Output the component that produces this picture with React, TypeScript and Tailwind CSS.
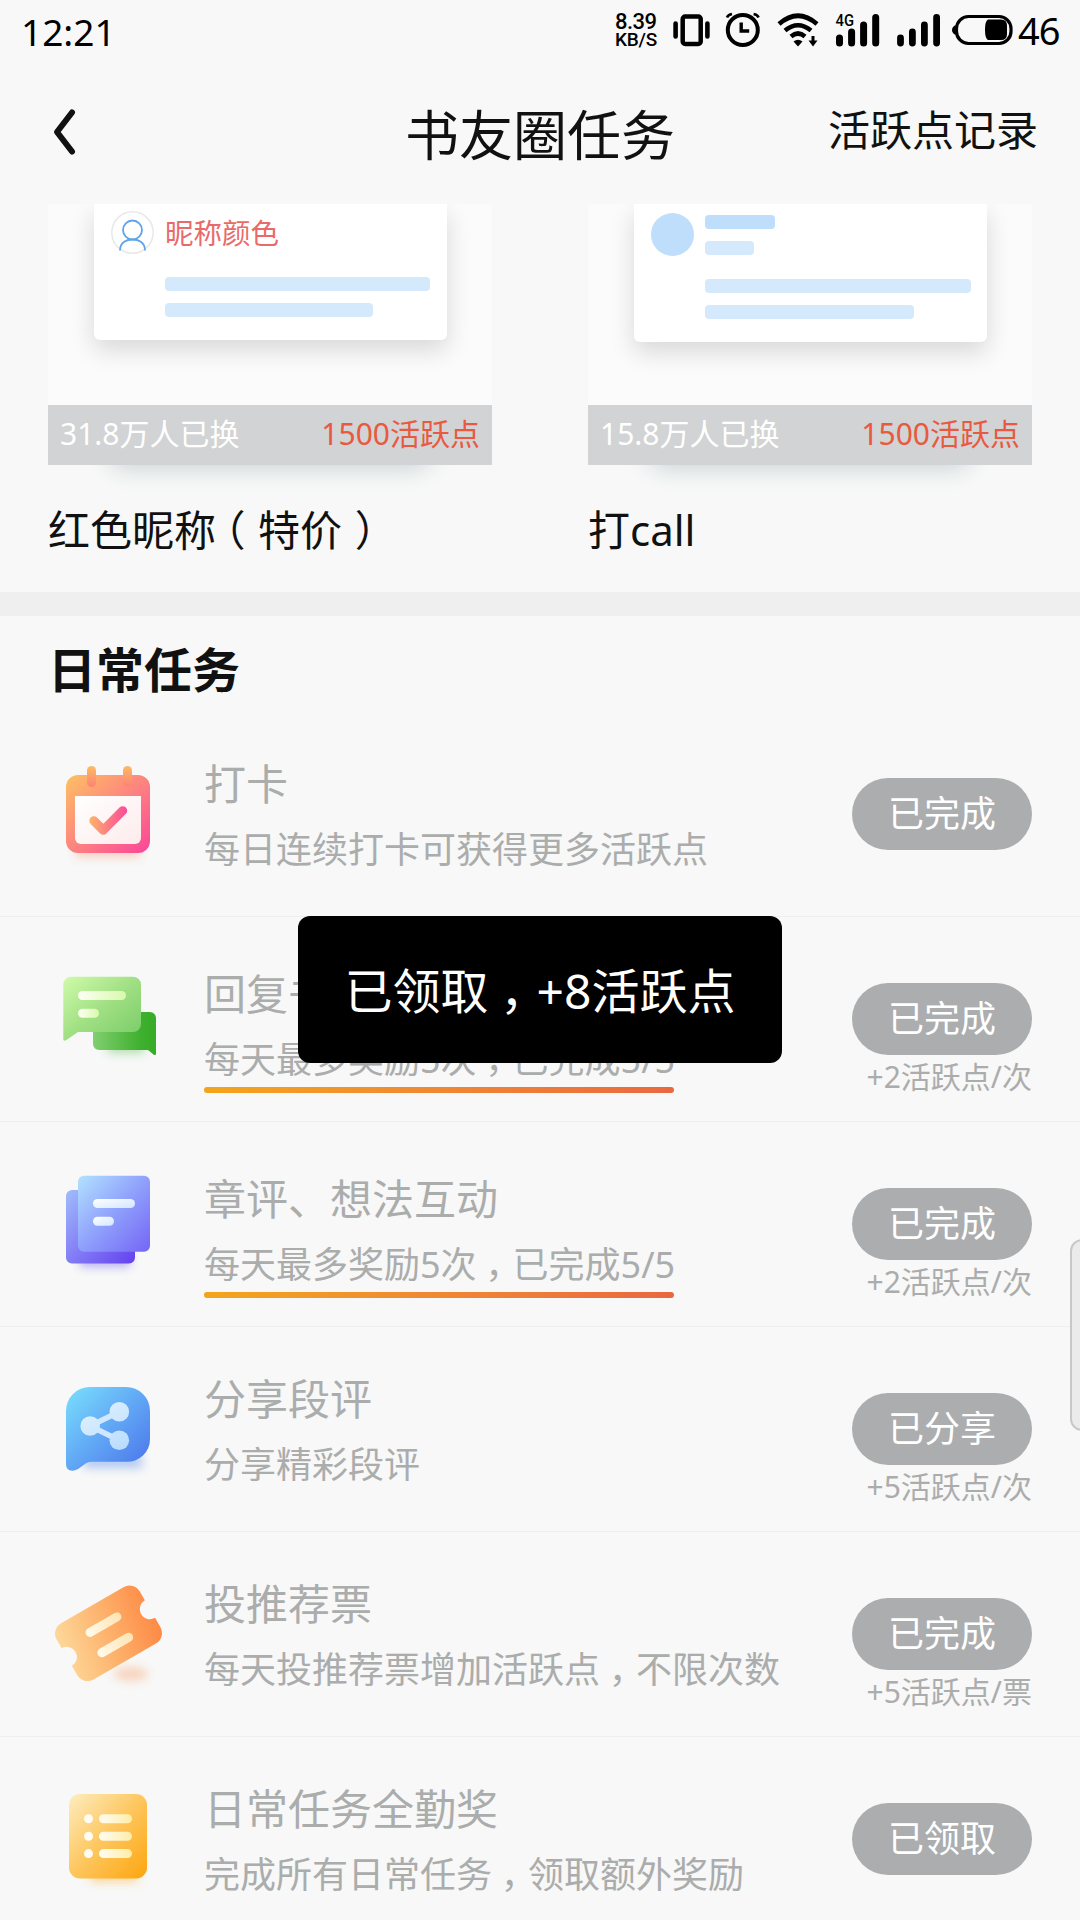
import React from "react";

const Comma = () => <span className="pr-[0.26em] pl-[0.24em] [font-feature-settings:'halt']">，</span>;

const StatusIcons = () => (
  <svg width="345" height="56" viewBox="670 0 345 56" fill="none" stroke="#000">
    <rect x="682.7" y="16.5" width="18" height="27.5" rx="2.5" strokeWidth="4.5" />
    <path d="M675.6 23.5v13M707.4 23.5v13" strokeWidth="4.6" strokeLinecap="round" />
    <circle cx="742.8" cy="30" r="15" strokeWidth="4" />
    <path d="M741.2 22.5v8.5h8" strokeWidth="3.4" />
    <path d="M727 17.5q1-2.7 5-3.5M758.6 17.5q-1-2.7-5-3.5" strokeWidth="2.6" />
    <path d="M779 24q19-16.5 38 0M785 30.5q13-10.5 26 0M791 36.5q7-6 14 0" strokeWidth="4.6" />
    <path d="M793.5 41.5q4.5-3.5 9 0L798 46.5z" fill="#000" stroke="none" />
    <path d="M813 36v7" strokeWidth="3" />
    <path d="M808.5 40.5h9L813 46.5z" fill="#000" stroke="none" />
    <path d="M839.5 38v5M851.6 32v11M863.6 25v18M875.7 17.5v25.5" strokeWidth="7" strokeLinecap="round" />
    <path d="M900.5 38v5M912.4 32v11M924.4 25v18M936.6 17.5v25.5" strokeWidth="6.8" strokeLinecap="round" />
    <rect x="956.5" y="16.5" width="54.5" height="27" rx="12" strokeWidth="3.2" />
    <path d="M955.5 25q-3.500 2-3.500 5t3.500 5z" fill="#000" stroke="none" />
    <path d="M988 19.500h13q6 0 6 6v8.500q0 6-6 6h-13q-3-1.500-3-10.200t3-10.300z" fill="#000" stroke="none" />
    <text x="835.5" y="26" fontSize="17" fontWeight="500" fill="#000" stroke="none" textLength="18.5" lengthAdjust="spacingAndGlyphs" fontFamily="Roboto, sans-serif">4G</text>
  </svg>
);

const Icon = ({ children }: { children: React.ReactNode }) => (
  <svg width="120" height="120" viewBox="0 0 120 120" fill="none" className="mt-[41px] shrink-0 overflow-visible">
    <filter id="soft" x="-50%" y="-100%" width="200%" height="300%">
      <feGaussianBlur stdDeviation="5" />
    </filter>
    {children}
  </svg>
);

const Grad = ({ id, from, mid, to }: { id: string; from: string; mid?: string; to: string }) => (
  <linearGradient id={id} x1="0" y1="0" x2="1" y2="1">
    <stop stopColor={from} />
    {mid && <stop offset=".5" stopColor={mid} />}
    <stop offset="1" stopColor={to} />
  </linearGradient>
);

const CalendarIcon = () => (
  <Icon>
    <Grad id="cal" from="#fdc163" mid="#fd8480" to="#fa4498" />
    <linearGradient id="calTab" x1="0" y1="0" x2="0" y2="1">
      <stop stopColor="#fdbb63" />
      <stop offset="1" stopColor="#fd8275" />
    </linearGradient>
    <Grad id="calIn" from="#ffffff" to="#fdebec" />
    <linearGradient id="calChk" gradientUnits="userSpaceOnUse" x1="42" y1="68" x2="79" y2="68">
      <stop stopColor="#fcb36a" />
      <stop offset=".5" stopColor="#fc7c83" />
      <stop offset="1" stopColor="#f94d97" />
    </linearGradient>
    <rect x="28" y="91" width="64" height="13" fill="#fb9a7c" opacity=".45" filter="url(#soft)" />
    <rect x="18" y="22" width="84" height="78" rx="12" fill="url(#cal)" />
    <rect x="39" y="13" width="9" height="21" rx="4.5" fill="url(#calTab)" />
    <rect x="75" y="13" width="9" height="21" rx="4.5" fill="url(#calTab)" />
    <path d="M27 43h66v42a6 6 0 0 1-6 6H33a6 6 0 0 1-6-6z" fill="url(#calIn)" />
    <path d="M45.8 67.7L55.3 77.2L74.7 57.7" stroke="url(#calChk)" strokeWidth="9" strokeLinecap="round" strokeLinejoin="round" />
  </Icon>
);

const ChatIcon = () => (
  <Icon>
    <Grad id="chA" from="#d0fbaa" mid="#a0df83" to="#76cb66" />
    <linearGradient id="chB" x1="0" y1="0" x2="1" y2="0">
      <stop stopColor="#82cf70" />
      <stop offset=".75" stopColor="#3fb02f" />
      <stop offset="1" stopColor="#36ac28" />
    </linearGradient>
    <linearGradient id="chL" x1="0" y1="0" x2="1" y2="0">
      <stop stopColor="#fdfff5" />
      <stop offset="1" stopColor="#d9f9ac" />
    </linearGradient>
    <rect x="60" y="84" width="36" height="11" fill="#57bb48" opacity=".45" filter="url(#soft)" />
    <path d="M51 54h51a6 6 0 0 1 6 6v35.500q0 2.500-2.500 1L100 92H51a6 6 0 0 1-6-6V60a6 6 0 0 1 6-6z" fill="url(#chB)" />
    <path d="M23.300 18.700H85a8 8 0 0 1 8 8V66a8 8 0 0 1-8 8H30l-12 8.200q-2.700 1.300-2.700-1.200V26.700a8 8 0 0 1 8-8z" fill="url(#chA)" />
    <rect x="30" y="33" width="48" height="9" rx="4.5" fill="url(#chL)" />
    <rect x="30" y="50.7" width="21" height="9" rx="4.5" fill="url(#chL)" />
  </Icon>
);

const DocsIcon = () => (
  <Icon>
    <Grad id="dcA" from="#b2e2ff" mid="#8fa0fc" to="#7565f5" />
    <Grad id="dcB" from="#a0bdfb" mid="#837df6" to="#6340ee" />
    <Grad id="dcL" from="#ffffff" to="#d2e5ff" />
    <rect x="32" y="91" width="50" height="13" fill="#705bf0" opacity=".45" filter="url(#soft)" />
    <rect x="18" y="27" width="69" height="73.5" rx="6" fill="url(#dcB)" />
    <rect x="30" y="12.7" width="72" height="76" rx="6" fill="url(#dcA)" />
    <rect x="45" y="36" width="42" height="9" rx="4.5" fill="url(#dcL)" />
    <rect x="45" y="53.7" width="21" height="9" rx="4.5" fill="url(#dcL)" />
  </Icon>
);

const ShareIcon = () => (
  <Icon>
    <Grad id="shA" from="#79e0fd" mid="#61a7f5" to="#4a71ea" />
    <linearGradient id="shL" gradientUnits="userSpaceOnUse" x1="40" y1="34" x2="70" y2="84">
      <stop stopColor="#e2f3ff" />
      <stop offset="1" stopColor="#b9dcfd" />
    </linearGradient>
    <rect x="36" y="87" width="58" height="13" fill="#5d8cf0" opacity=".45" filter="url(#soft)" />
    <path d="M42 19h36a24 24 0 0 1 24 24v28a22.500 22.500 0 0 1-24 22.700H43q-3 0-5 1.500l-8 5.800q-5 3-9 1-3-1.500-3-6V43A24 24 0 0 1 42 19z" fill="url(#shA)" />
    <g fill="url(#shL)">
      <path d="M71.3 43.7L42 58l29.3 14.3" fill="none" stroke="#d0e8ff" strokeWidth="5.5" />
      <circle cx="42.2" cy="58" r="9.8" />
      <circle cx="71.3" cy="43.7" r="9.8" />
      <circle cx="71.3" cy="72.3" r="9.8" />
    </g>
  </Icon>
);

const TicketIcon = () => (
  <Icon>
    <linearGradient id="tkG" gradientUnits="userSpaceOnUse" x1="-48" y1="0" x2="48" y2="20">
      <stop stopColor="#fdd596" />
      <stop offset=".5" stopColor="#fdb06a" />
      <stop offset="1" stopColor="#fd8a45" />
    </linearGradient>
    <linearGradient id="tkL" gradientUnits="userSpaceOnUse" x1="-18" y1="0" x2="18" y2="0">
      <stop stopColor="#fffaea" />
      <stop offset="1" stopColor="#fee5b4" />
    </linearGradient>
    <ellipse cx="83" cy="101" rx="17" ry="7" fill="#fb9c67" opacity=".4" filter="url(#soft)" />
    <g transform="translate(60.5 60.3) rotate(-30)">
      <path d="M-36-32.500H36A12 12 0 0 1 48-20.500V-10.500A10.200 10.200 0 0 0 48 9.900V20.500A12 12 0 0 1 36 32.500H-36A12 12 0 0 1-48 20.500V9.900A10.200 10.200 0 0 0-48-10.500V-20.500A12 12 0 0 1-36-32.500z" fill="url(#tkG)" />
      <rect x="-20" y="-14.5" width="40" height="9" rx="4.5" fill="url(#tkL)" />
      <rect x="-20" y="9" width="40" height="9" rx="4.5" fill="url(#tkL)" />
    </g>
  </Icon>
);

const ListIcon = () => (
  <Icon>
    <Grad id="lsA" from="#feedc0" mid="#fdc65e" to="#fda50d" />
    <linearGradient id="lsL" x1="0" y1="0" x2="1" y2="0">
      <stop stopColor="#fffdf3" />
      <stop offset="1" stopColor="#fdeda8" />
    </linearGradient>
    <rect x="42" y="91" width="48" height="13" fill="#fdb53c" opacity=".5" filter="url(#soft)" />
    <rect x="21" y="16" width="78" height="84.5" rx="11" fill="url(#lsA)" />
    {[40.7, 58.2, 75.6].map((y) => (
      <g key={y}>
        <circle cx="40.5" cy={y} r="4.5" fill="#fffdf3" />
        <rect x="51" y={y - 4.5} width="33" height="9" rx="4.5" fill="url(#lsL)" />
      </g>
    ))}
  </Icon>
);

type Task = {
  icon: React.ReactNode;
  title: string;
  desc: React.ReactNode;
  button: string;
  note?: string;
  bar?: boolean;
};

const progress = (
  <>
    每天最多奖励5次<Comma />已完成5/5
  </>
);

const tasks: Task[] = [
  { icon: <CalendarIcon />, title: "打卡", desc: "每日连续打卡可获得更多活跃点", button: "已完成" },
  { icon: <ChatIcon />, title: "回复书评", desc: progress, button: "已完成", note: "+2活跃点/次", bar: true },
  { icon: <DocsIcon />, title: "章评、想法互动", desc: progress, button: "已完成", note: "+2活跃点/次", bar: true },
  { icon: <ShareIcon />, title: "分享段评", desc: "分享精彩段评", button: "已分享", note: "+5活跃点/次" },
  {
    icon: <TicketIcon />,
    title: "投推荐票",
    desc: (
      <>
        每天投推荐票增加活跃点<Comma />不限次数
      </>
    ),
    button: "已完成",
    note: "+5活跃点/票",
  },
  {
    icon: <ListIcon />,
    title: "日常任务全勤奖",
    desc: (
      <>
        完成所有日常任务<Comma />领取额外奖励
      </>
    ),
    button: "已领取",
  },
];

const TaskRow = ({ t }: { t: Task }) => (
  <div className="flex h-[205px] shrink-0 items-start border-b border-[#eeefef] px-12">
    {t.icon}
    <div className={t.bar ? "ml-9 flex-1 pt-[53px]" : "ml-9 flex-1 pt-12"}>
      <div className="text-[42px] leading-[48px]">{t.title}</div>
      <div className="mt-[18px] text-[36px] leading-[48px]">{t.desc}</div>
      {t.bar && <div className="mt-[3px] h-1.5 w-[470px] rounded-full bg-linear-to-r from-[#f3a519] to-[#e9683f]" />}
    </div>
    <div className="flex w-[180px] flex-col items-end pt-[66px]">
      <div className="flex h-[72px] w-[180px] items-center justify-center rounded-full bg-[#abadae] text-[36px] leading-[48px] text-white">
        {t.button}
      </div>
      {t.note && <div className="mt-px text-[30px] leading-[42px]">{t.note}</div>}
    </div>
  </div>
);

const Reward = ({ preview, count, name }: { preview: React.ReactNode; count: string; name: React.ReactNode }) => (
  <div className="w-[444px]">
    <div className="h-[201px] overflow-hidden bg-[#fbfbfb] pr-[45px] pl-[46px]">{preview}</div>
    <div className="flex h-[60px] items-center justify-between bg-[#d1d3d4] px-3 pb-0.5 text-[30px] leading-[42px] text-white">
      <span>{count}</span>
      <span className="text-[#e8593f]">1500活跃点</span>
    </div>
    <div className="h-[30px] overflow-hidden px-[60px]">
      <div className="-mt-10 h-10 rounded-[20px] shadow-[0_4px_22px_#ccd3d8]" />
    </div>
    <div className="mt-[11px] text-[42px] leading-[48px] text-[#111]">{name}</div>
  </div>
);

export default function App() {
  return (
    <div className="relative flex h-[1920px] w-[1080px] flex-col overflow-hidden bg-[#f7f8f7] font-['Noto_Sans','Noto_Sans_CJK_SC',sans-serif] whitespace-nowrap text-[#abacac]">
      <div className="flex h-[66px] shrink-0 items-start text-black">
        <span className="mt-[7px] ml-[21px] flex-1 text-[37px] leading-[50px]">12:21</span>
        <div className="mt-[13px] mr-3 w-[43px] font-[Roboto,sans-serif] font-medium">
          <div className="text-[22px] leading-[18px] tracking-[-0.5px]">8.39</div>
          <div className="text-[19px] leading-[17px] tracking-[-0.2px]">KB/S</div>
        </div>
        <StatusIcons />
        <span className="mt-[5px] w-[65px] pl-[3px] text-[38px] leading-[50px] tracking-[-1px]">46</span>
      </div>

      <div className="grid h-[138px] shrink-0 grid-cols-3 items-start px-[42px] text-[#111]">
        <svg width="48" height="60" viewBox="0 0 48 60" fill="none" stroke="#111" strokeWidth="6" strokeLinecap="round" strokeLinejoin="round" className="mt-9">
          <path d="M30 10.5L15 30l15 19.5" />
        </svg>
        <h1 className="mt-[37px] text-center text-[54px] leading-[64px]">书友圈任务</h1>
        <span className="mt-9 text-right text-[42px] leading-[56px]">活跃点记录</span>
      </div>

      <div className="flex h-[388px] shrink-0 justify-between px-12">
        <Reward
          count="31.8万人已换"
          name={
            <>
              红色昵称<span className="pr-[0.3em] pl-[0.2em] [font-feature-settings:'halt']">（</span>特价
              <span className="pr-[0.2em] pl-[0.3em] [font-feature-settings:'halt']">）</span>
            </>
          }
          preview={
            <div className="h-[136px] rounded-b-md bg-white pt-[7px] pl-[17px] shadow-[0_10px_24px_rgba(0,0,0,0.14)]">
              <div className="flex items-center gap-[11px]">
                <svg width="43" height="43" viewBox="0 0 43 43" fill="none" stroke="#5fa4e8" strokeWidth="1.8">
                  <circle cx="21.5" cy="21.5" r="20.7" stroke="#e8e8ea" strokeWidth="1.5" />
                  <circle cx="21.5" cy="19" r="9.5" />
                  <path d="M9 39.500C9 31 16 28.500 21.500 28.500S34 31 34 39.500" />
                </svg>
                <span className="pt-0.5 text-[28.5px] leading-[41px] text-[#ea6a6a]">昵称颜色</span>
              </div>
              <div className="mt-[23px] ml-[54px] h-[14px] w-[265px] rounded-sm bg-[#d5e9fd]" />
              <div className="mt-3 ml-[54px] h-[14px] w-[208px] rounded-sm bg-[#d5e9fd]" />
            </div>
          }
        />
        <Reward
          count="15.8万人已换"
          name="打call"
          preview={
            <div className="h-[138px] rounded-b-md bg-white pt-[9px] pl-[17px] shadow-[0_10px_24px_rgba(0,0,0,0.14)]">
              <div className="flex gap-[11px]">
                <div className="h-[43px] w-[43px] rounded-full bg-[#bedefb]" />
                <div className="pt-[2px]">
                  <div className="h-[14px] w-[70px] rounded-sm bg-[#bedefb]" />
                  <div className="mt-3 h-[14px] w-[49px] rounded-sm bg-[#d5e9fd]" />
                </div>
              </div>
              <div className="mt-[23px] ml-[54px] h-[14px] w-[266px] rounded-sm bg-[#d5e9fd]" />
              <div className="mt-3 ml-[54px] h-[14px] w-[209px] rounded-sm bg-[#d5e9fd]" />
            </div>
          }
        />
      </div>

      <div className="h-6 shrink-0 bg-[#efefef]" />
      <h2 className="h-[96px] shrink-0 pt-6 pl-12 text-[48px] leading-[60px] font-bold text-[#111]">日常任务</h2>
      {tasks.map((t, i) => (
        <TaskRow key={i} t={t} />
      ))}

      <div className="absolute top-[916px] left-1/2 flex h-[147px] w-[484px] -translate-x-1/2 items-center justify-center rounded-xl bg-black pt-[3px] text-[48px] leading-[60px] text-white">
        <span>
          已领取<Comma />+8活跃点
        </span>
      </div>
      <div className="absolute top-[1239px] right-[-14px] h-[192px] w-6 rounded-xl border-2 border-[#c8c8c8] bg-[#ebebeb]" />
    </div>
  );
}
